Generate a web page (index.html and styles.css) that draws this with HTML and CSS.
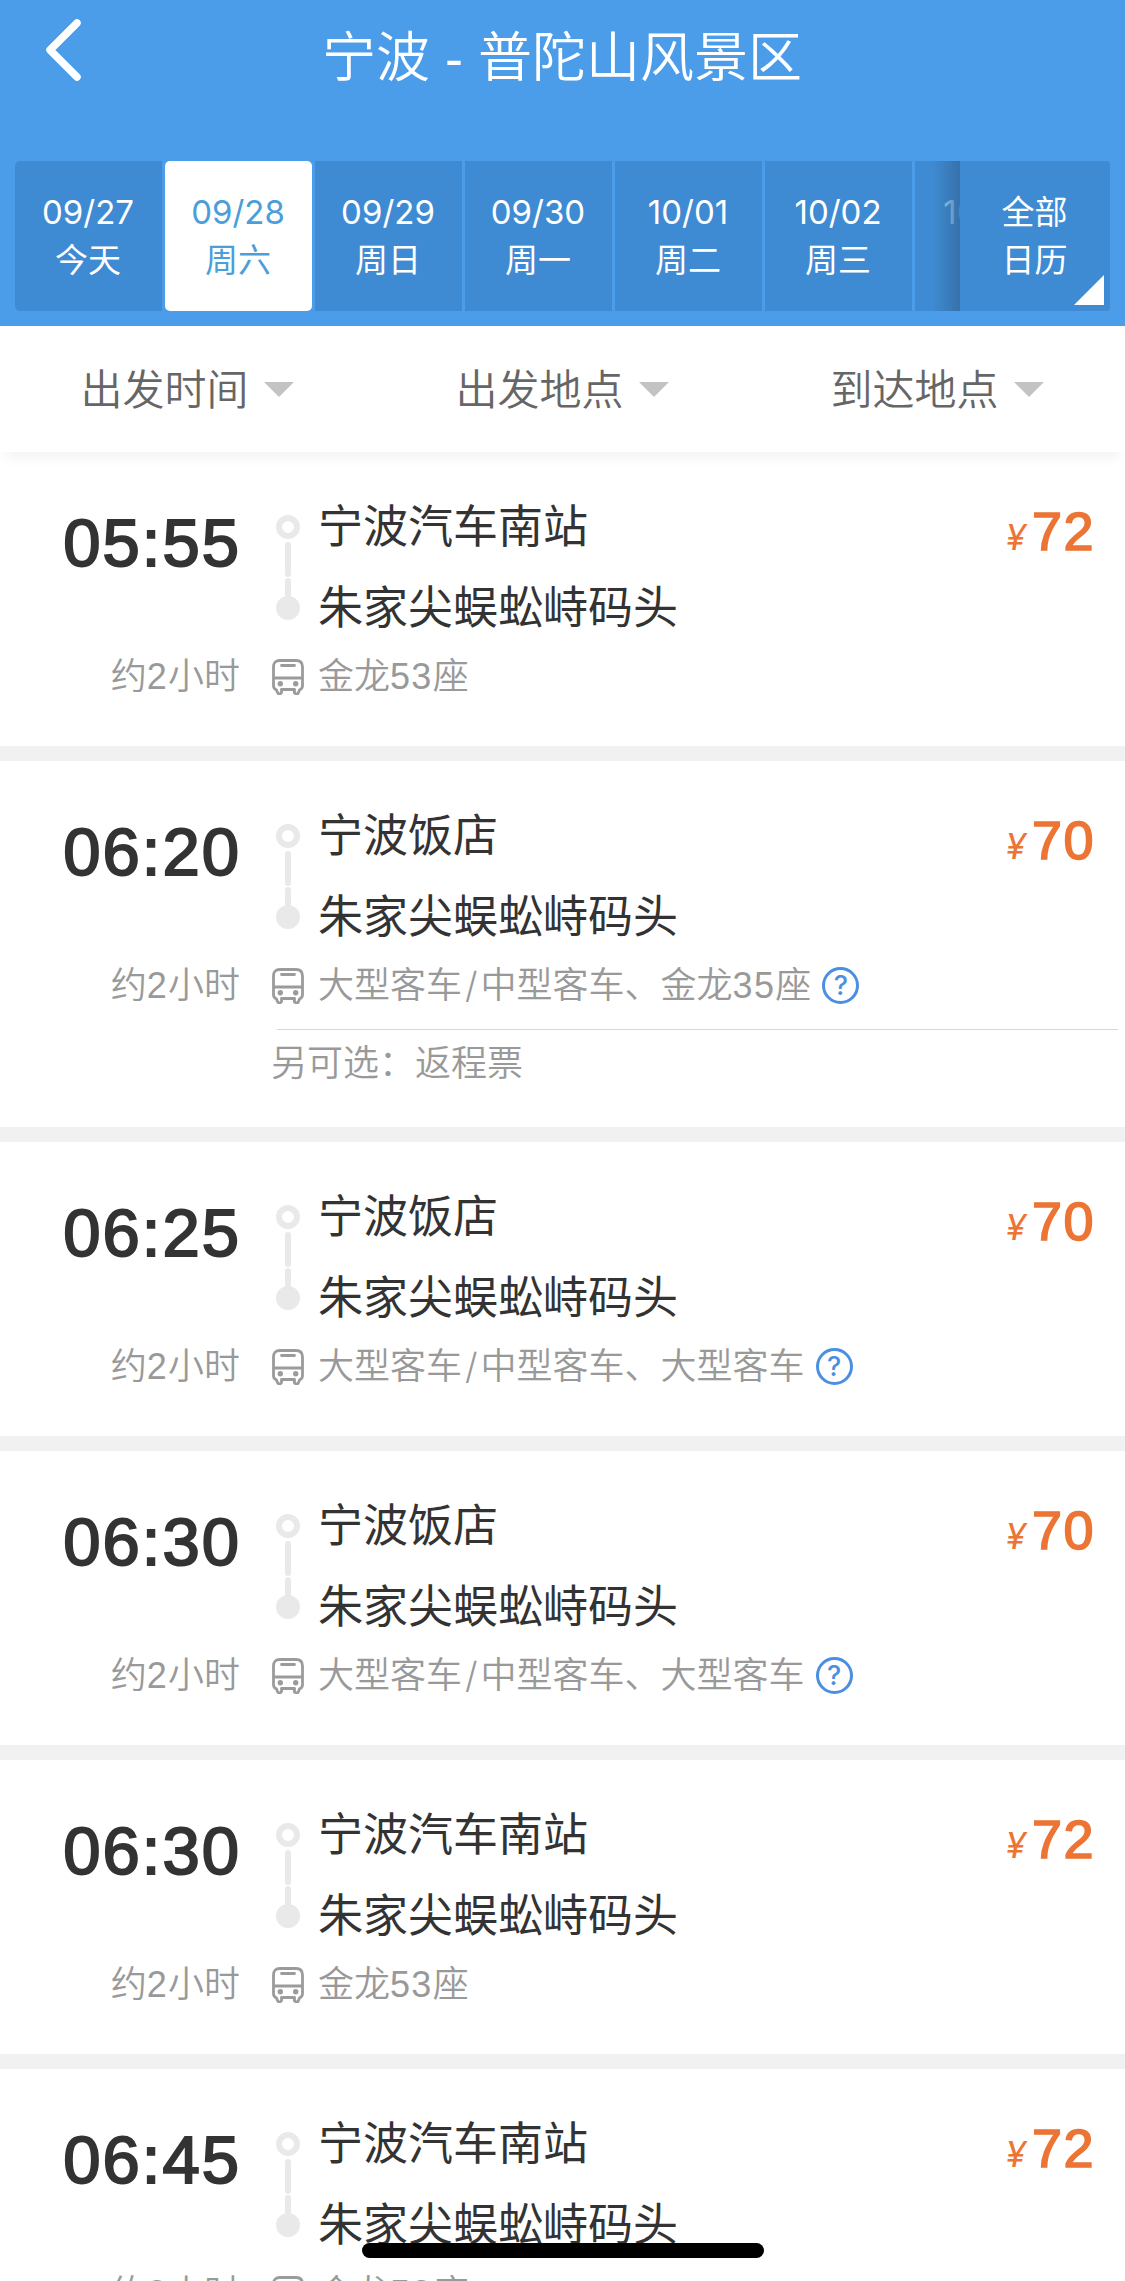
FILE: index.html
```html
<!DOCTYPE html>
<html lang="zh-CN">
<head>
    <meta charset="UTF-8">
    <meta name="viewport" content="width=device-width, initial-scale=1.0">
    <title>宁波 - 普陀山风景区</title>
    <link rel="stylesheet" href="styles.css">
</head>
<body>
    <!-- shared icons -->
    <svg class="icons">
        <symbol id="rail" viewBox="0 0 24 162">
            <circle cx="12" cy="41" r="9" fill="none" stroke="#e9e9e9" stroke-width="6" />
            <path d="M12 59V88M12 95V116" fill="none" stroke="#e9e9e9" stroke-width="6" stroke-linecap="round" />
            <circle cx="12" cy="122" r="12" fill="#e9e9e9" />
        </symbol>
        <symbol id="bus" viewBox="0 0 32 36">
            <path d="M9.500 30.500H22.500M9.500 30.500V32A2 2 0 0 1 5.500 33.500L4.500 31C2.500 30 1.500 29 1.500 27V8Q1.500 1.500 8 1.500H24Q30.500 1.500 30.500 8V27C30.500 29 29.500 30 27.500 31L26.500 33.500A2 2 0 0 1 22.500 32V30.500M1.500 19H30.500M9.500 6.500H22.500" fill="none" stroke="#9b9b9b" stroke-width="2.800" stroke-linecap="round" stroke-linejoin="round" />
            <circle cx="8.300" cy="24.800" r="2.700" fill="#9b9b9b" />
            <circle cx="23.700" cy="24.800" r="2.700" fill="#9b9b9b" />
        </symbol>
    </svg>
    <div class="page">
        <header class="header">
            <div class="navbar">
                <svg class="back" viewBox="0 0 38 64">
                    <path d="M33 5L6 32L33 59" fill="none" stroke="#fff" stroke-width="7.500" stroke-linecap="round" stroke-linejoin="round" />
                </svg>
                <h1>宁波 - 普陀山风景区</h1>
            </div>
            <div class="dates">
                <div class="days">
                    <div class="day first"><p>09/27</p><p>今天</p></div>
                    <div class="day active"><p>09/28</p><p>周六</p></div>
                    <div class="day"><p>09/29</p><p>周日</p></div>
                    <div class="day"><p>09/30</p><p>周一</p></div>
                    <div class="day"><p>10/01</p><p>周二</p></div>
                    <div class="day"><p>10/02</p><p>周三</p></div>
                    <div class="day faded"><p>10/03</p></div>
                </div>
                <div class="calendar"><p>全部</p><p>日历</p></div>
            </div>
        </header>
        <nav class="filters">
            <div class="filter">出发时间<i class="arrow"></i></div>
            <div class="filter">出发地点<i class="arrow"></i></div>
            <div class="filter">到达地点<i class="arrow"></i></div>
        </nav>
        <main class="trips">
            <section class="trip">
                <div class="trip_main">
                    <p class="time">05:55</p>
                    <svg class="rail"><use href="#rail" /></svg>
                    <div class="stations"><p>宁波汽车南站</p><p>朱家尖蜈蚣峙码头</p></div>
                    <p class="price"><i>¥</i>72</p>
                </div>
                <div class="trip_info">
                    <p class="duration">约<span class="num">2</span>小时</p>
                    <svg class="bus"><use href="#bus" /></svg>
                    <p>金龙<span class="num">53</span>座</p>
                </div>
            </section>
            <section class="trip">
                <div class="trip_main">
                    <p class="time">06:20</p>
                    <svg class="rail"><use href="#rail" /></svg>
                    <div class="stations"><p>宁波饭店</p><p>朱家尖蜈蚣峙码头</p></div>
                    <p class="price"><i>¥</i>70</p>
                </div>
                <div class="trip_info">
                    <p class="duration">约<span class="num">2</span>小时</p>
                    <svg class="bus"><use href="#bus" /></svg>
                    <p>大型客车<span class="slash">/</span>中型客车、金龙<span class="num">35</span>座</p>
                    <span class="help">?</span>
                </div>
                <p class="note">另可选：返程票</p>
            </section>
            <section class="trip">
                <div class="trip_main">
                    <p class="time">06:25</p>
                    <svg class="rail"><use href="#rail" /></svg>
                    <div class="stations"><p>宁波饭店</p><p>朱家尖蜈蚣峙码头</p></div>
                    <p class="price"><i>¥</i>70</p>
                </div>
                <div class="trip_info">
                    <p class="duration">约<span class="num">2</span>小时</p>
                    <svg class="bus"><use href="#bus" /></svg>
                    <p>大型客车<span class="slash">/</span>中型客车、大型客车</p>
                    <span class="help">?</span>
                </div>
            </section>
            <section class="trip">
                <div class="trip_main">
                    <p class="time">06:30</p>
                    <svg class="rail"><use href="#rail" /></svg>
                    <div class="stations"><p>宁波饭店</p><p>朱家尖蜈蚣峙码头</p></div>
                    <p class="price"><i>¥</i>70</p>
                </div>
                <div class="trip_info">
                    <p class="duration">约<span class="num">2</span>小时</p>
                    <svg class="bus"><use href="#bus" /></svg>
                    <p>大型客车<span class="slash">/</span>中型客车、大型客车</p>
                    <span class="help">?</span>
                </div>
            </section>
            <section class="trip">
                <div class="trip_main">
                    <p class="time">06:30</p>
                    <svg class="rail"><use href="#rail" /></svg>
                    <div class="stations"><p>宁波汽车南站</p><p>朱家尖蜈蚣峙码头</p></div>
                    <p class="price"><i>¥</i>72</p>
                </div>
                <div class="trip_info">
                    <p class="duration">约<span class="num">2</span>小时</p>
                    <svg class="bus"><use href="#bus" /></svg>
                    <p>金龙<span class="num">53</span>座</p>
                </div>
            </section>
            <section class="trip">
                <div class="trip_main">
                    <p class="time">06:45</p>
                    <svg class="rail"><use href="#rail" /></svg>
                    <div class="stations"><p>宁波汽车南站</p><p>朱家尖蜈蚣峙码头</p></div>
                    <p class="price"><i>¥</i>72</p>
                </div>
                <div class="trip_info">
                    <p class="duration">约<span class="num">2</span>小时</p>
                    <svg class="bus"><use href="#bus" /></svg>
                    <p>金龙<span class="num">53</span>座</p>
                </div>
            </section>
        </main>
        <div class="home_bar"></div>
    </div>
</body>
</html>
```

FILE: styles.css
```css
* {
    margin: 0;
    padding: 0;
    box-sizing: border-box;
}
body {
    font-family: Inter, "Noto Sans CJK SC", sans-serif;
    color: #333;
    background-color: white;
}
.icons {
    display: none;
}
.page {
    position: relative;
    width: 1125px;
    height: 2281px;
    overflow: hidden;
}

/* header */
.header {
    height: 326px;
    background-color: #4b9ce9;
    color: white;
}
.navbar {
    display: flex;
    height: 161px;
    padding: 18px 0 0 44px;
}
.back {
    width: 38px;
    height: 64px;
}
h1 {
    flex: 1;
    margin-right: 83px;
    text-align: center;
    font-family: "Liberation Sans", "Noto Sans CJK SC", sans-serif;
    font-size: 54px;
    font-weight: 350;
    line-height: 81px;
}
.dates {
    display: flex;
    width: 1095px;
    height: 150px;
    margin-left: 15px;
}
.days {
    position: relative;
    display: flex;
    gap: 3px;
    width: 945px;
    overflow: hidden;
}
/* shade where the days slide under the calendar button */
.days::after {
    content: "";
    position: absolute;
    top: 0;
    right: 0;
    width: 28px;
    height: 150px;
    background: linear-gradient(to right, rgba(52, 107, 160, 0), rgba(52, 107, 160, 0.8));
}
.day, .calendar {
    flex: none;
    width: 147px;
    padding: 27px 1px 0 0;
    background-color: #3f8bd3;
    text-align: center;
    font-size: 33px;
    line-height: 48px;
}
.first {
    border-radius: 5px 0 0 5px;
}
.active {
    border-radius: 5px;
    background-color: white;
    color: #4b9ed9;
}
.faded {
    padding-right: 3px;
    color: #b4e4fa;
}
.calendar {
    position: relative;
    width: 150px;
    border-radius: 0 3px 3px 0;
}
.calendar::after {
    content: "";
    position: absolute;
    right: 6px;
    bottom: 6px;
    border-left: 30px solid transparent;
    border-bottom: 30px solid white;
}

/* filters */
.filters {
    display: flex;
    height: 126px;
    box-shadow: 0 12px 12px -6px rgba(0, 0, 0, 0.05);
}
.filter {
    flex: 1;
    display: flex;
    align-items: center;
    justify-content: center;
    gap: 15px;
    padding: 0 1px 5px 0;
    font-size: 42px;
    font-weight: 350;
    color: #666;
}
.arrow {
    margin-top: 5px;
    border: 15px solid transparent;
    border-top-color: #c3c3c3;
    border-bottom: 0;
}

/* trip list */
.trip {
    padding: 34px 0 41px;
}
.trip + .trip {
    border-top: 15px solid #f1f1f1;
}
.trip_main {
    display: flex;
    height: 162px;
}
.time {
    width: 241px;
    text-align: right;
    font-family: "Liberation Sans", sans-serif;
    font-size: 67px;
    letter-spacing: 2px;
    line-height: 113px;
    -webkit-text-stroke: 2px #333;
}
.rail {
    width: 24px;
    height: 162px;
    margin: 0 18px 0 35px;
}
.stations {
    font-size: 45px;
    line-height: 81px;
}
.price {
    margin-left: auto;
    padding-right: 30px;
    font-family: "Liberation Sans", sans-serif;
    font-size: 54px;
    letter-spacing: 1.5px;
    line-height: 91px;
    color: #ec7434;
    -webkit-text-stroke: 1.6px #ec7434;
}
.price i {
    margin-right: 5px;
    font-family: Inter, sans-serif;
    font-size: 36px;
    font-weight: 400;
    -webkit-text-stroke: 0;
}
.trip_info {
    display: flex;
    align-items: center;
    height: 57px;
    font-size: 36px;
    font-weight: 350;
    line-height: 57px;
    color: #999;
}
.num {
    font-family: "Liberation Sans", sans-serif;
    letter-spacing: 1.3px;
}
.slash {
    margin: 0 3px;
}
.duration {
    width: 240px;
    text-align: right;
}
.bus {
    width: 32px;
    height: 36px;
    margin: 0 14px 0 32px;
}
.help {
    width: 37px;
    height: 37px;
    margin-left: 11px;
    border: 3px solid #4a8fe2;
    border-radius: 50%;
    text-align: center;
    font-size: 27px;
    font-weight: 500;
    line-height: 31px;
    color: #4a8fe2;
}
.note {
    margin: 15px 7px -11px 277px;
    border-top: 1px solid #d6d6d6;
    text-indent: -6px;
    font-size: 36px;
    font-weight: 350;
    line-height: 67px;
    color: #999;
}

.home_bar {
    position: absolute;
    left: 362px;
    top: 2243px;
    width: 402px;
    height: 15px;
    border-radius: 8px;
    background-color: black;
}
```
